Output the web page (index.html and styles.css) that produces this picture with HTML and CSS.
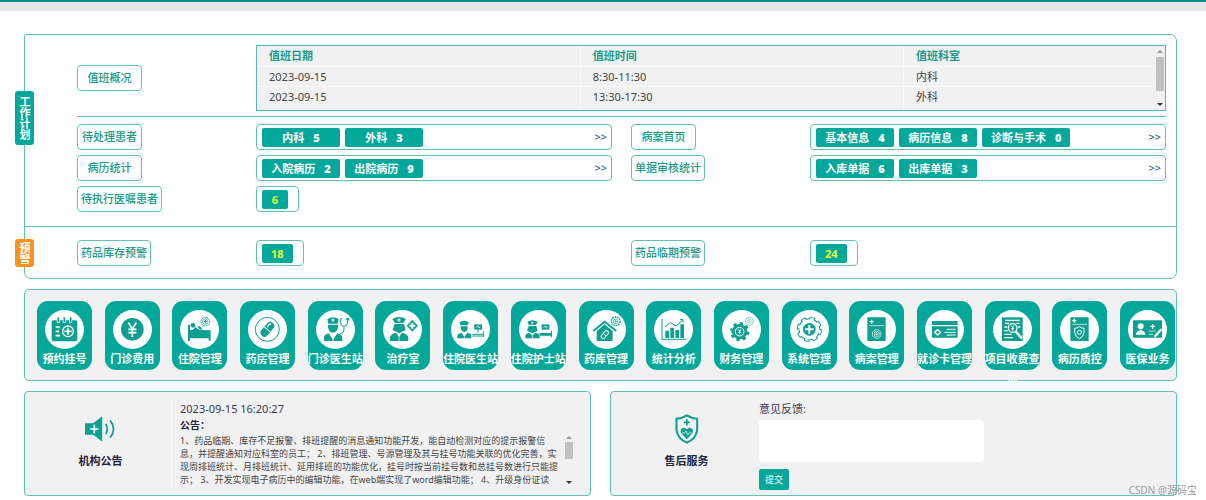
FILE: index.html
```html
<!DOCTYPE html>
<html lang="zh-CN">

	<head>
		<meta charset="UTF-8" />
		<meta name="viewport" content="width=device-width, initial-scale=1" />
		<title>工作台</title>
		<link rel="stylesheet" href="styles.css">
	</head>
	<body>
		<header class="topbar"></header>
		<main class="content">

			<!-- work plan + warnings -->
			<div class="panel">
				<section class="plan">
					<h2 class="side-tab">工作计划</h2>
					<div class="duty">
						<div class="name-col"><span class="name">值班概况</span></div>
						<div class="duty-box">
							<table class="duty-table">
								<thead>
									<tr><th class="col-date">值班日期</th><th class="col-time">值班时间</th><th>值班科室</th></tr>
								</thead>
								<tbody>
									<tr><td>2023-09-15</td><td>8:30-11:30</td><td>内科</td></tr>
									<tr><td>2023-09-15</td><td>13:30-17:30</td><td>外科</td></tr>
									<tr><td></td><td></td><td></td></tr>
								</tbody>
							</table>
							<div class="scroll"><i class="up"></i><i class="thumb"></i><i class="down"></i></div>
						</div>
					</div>
					<div class="items">
						<div class="item">
							<div class="name-col"><span class="name">待处理患者</span></div>
							<div class="values">
								<span class="chip">内科<b>5</b></span>
								<span class="chip">外科<b>3</b></span>
								<a class="more" href="#">&gt;&gt;</a>
							</div>
						</div>
						<div class="item">
							<div class="name-col"><span class="name">病案首页</span></div>
							<div class="values">
								<span class="chip">基本信息<b>4</b></span>
								<span class="chip">病历信息<b>8</b></span>
								<span class="chip">诊断与手术<b>0</b></span>
								<a class="more" href="#">&gt;&gt;</a>
							</div>
						</div>
						<div class="item">
							<div class="name-col"><span class="name">病历统计</span></div>
							<div class="values">
								<span class="chip">入院病历<b>2</b></span>
								<span class="chip">出院病历<b>9</b></span>
								<a class="more" href="#">&gt;&gt;</a>
							</div>
						</div>
						<div class="item">
							<div class="name-col"><span class="name">单据审核统计</span></div>
							<div class="values">
								<span class="chip">入库单据<b>6</b></span>
								<span class="chip">出库单据<b>3</b></span>
								<a class="more" href="#">&gt;&gt;</a>
							</div>
						</div>
						<div class="item">
							<div class="name-col"><span class="name">待执行医嘱患者</span></div>
							<div class="values small"><span class="chip count">6</span></div>
						</div>
					</div>
				</section>
				<section class="warn">
					<h2 class="side-tab orange">预警</h2>
					<div class="items">
						<div class="item">
							<div class="name-col"><span class="name">药品库存预警</span></div>
							<div class="values small"><span class="chip count">18</span></div>
						</div>
						<div class="item">
							<div class="name-col"><span class="name">药品临期预警</span></div>
							<div class="values small"><span class="chip count">24</span></div>
						</div>
					</div>
				</section>
			</div>

			<!-- modules -->
			<nav class="modules">
				<a class="module" href="#">
					<svg viewBox="0 0 117 117">
						<rect x="20" y="31" width="77" height="63" rx="6" />
						<path class="w" stroke-width="9" d="M40 24v14M58 24v14M77 24v14" />
						<path class="l" stroke-width="5" d="M40 22v14M58 22v14M77 22v14" />
						<path class="w" stroke-width="5" d="M32 51h13M32 64h10M32 77h13" />
						<circle class="w" cx="69" cy="64" r="16" stroke-width="4" />
						<path class="w" stroke-width="5" d="M69 53v22M58 64h22" />
					</svg>
					<span>预约挂号</span>
				</a>
				<a class="module" href="#">
					<svg viewBox="0 0 117 117">
						<circle cx="58" cy="58" r="34" />
						<path class="w" stroke-width="5" d="M46 38l12 19 12-19M58 57v24M46 58h24M46 68h24" />
					</svg>
					<span>门诊费用</span>
				</a>
				<a class="module" href="#">
					<svg viewBox="0 0 117 117">
						<circle cx="39" cy="46" r="7" />
						<path d="M24 44h6v16h9l6-9 14 9 33 1v31h-6v-7H30v8h-6zM51 50l8-1 9 9-7 1z" />
						<circle class="l" cx="76" cy="35" r="13" stroke-width="3" stroke-dasharray="5 2" />
						<circle class="l" cx="76" cy="35" r="8" stroke-width="2" />
						<path class="l" stroke-width="3" d="M76 30v10M71 35h10" />
					</svg>
					<span>住院管理</span>
				</a>
				<a class="module" href="#">
					<svg viewBox="0 0 117 117">
						<circle class="l" cx="58" cy="58" r="36" stroke-width="3" />
						<g transform="rotate(40 58 58)">
							<rect x="46" y="33" width="24" height="50" rx="12" />
							<path class="w" stroke-width="3" d="M46 58h24" />
							<path class="w" stroke-width="4" d="M53 53v-9q0-4 4-5" />
						</g>
					</svg>
					<span>药房管理</span>
				</a>
				<a class="module" href="#">
					<svg viewBox="0 0 117 117">
						<path d="M34 28q17-12 34 0l-3 13H37z" />
						<path class="w" stroke-width="3" d="M51 25v10M46 30h10" />
						<path d="M36 44h30v7q-2 17-15 17T36 51z" />
						<path d="M24 93V82q1-8 14-12l13 17 13-17q14 4 15 12v11z" />
						<path class="w" stroke-width="3" d="M51 88v6M42 73l9 14 9-14" />
						<path class="l" stroke-width="3" d="M78 26h-4v13q0 10 10 10t10-10V26h-4M84 49v10q0 12-12 12" />
						<circle cx="96" cy="28" r="4" />
					</svg>
					<span>门诊医生站</span>
				</a>
				<a class="module" href="#">
					<svg viewBox="0 0 117 117">
						<path d="M28 27q20-12 41 0l-8 12H36z" />
						<path class="w" stroke-width="3" d="M48 25v10M43 30h10" />
						<path d="M34 42h29l5 19-9 3q-10 10-21 0l-9-3z" />
						<path d="M21 93V82q2-10 18-14l9 13 9-13q17 4 19 14v11z" />
						<path class="w" stroke-width="2" d="M48 78v16" />
						<path d="M88 29l17 18-17 18-17-18z" />
						<path class="w" stroke-width="6" d="M88 38v18M79 47h18" />
					</svg>
					<span>治疗室</span>
				</a>
				<a class="module" href="#">
					<svg viewBox="0 0 117 117">
						<path d="M26 37q13-9 27 0l-2 9H28z" />
						<path d="M29 49h21v5q-2 12-10 12T29 54z" />
						<path d="M19 85v-9q2-6 12-8l9 11 9-11q11 2 12 8v9z" />
						<path class="w" stroke-width="2" d="M33 68l7 11 7-11M40 79v6" />
						<rect x="70" y="43" width="23" height="16" />
						<path class="w" stroke-width="2" d="M75 51h4l3-4 2 7 4-3" />
						<path class="l" stroke-width="3" d="M64 73h34M81 59v9M98 64v18M64 78h34" />
					</svg>
					<span>住院医生站</span>
				</a>
				<a class="module" href="#">
					<svg viewBox="0 0 117 117">
						<path d="M25 35q15-9 31 0l-5 10H30z" />
						<path d="M29 48h23l4 15-8 3q-8 7-16 0l-8-3z" />
						<path d="M19 85v-8q2-7 13-9l8 9 8-9q13 2 14 9v8z" />
						<path class="w" stroke-width="2" d="M40 35v8M36 39h8M40 77v8" />
						<rect x="68" y="43" width="23" height="16" />
						<path class="w" stroke-width="2" d="M73 51h4l3-4 2 7 4-3" />
						<path d="M62 69h34v-7h3v20h-3v-5H62z" />
					</svg>
					<span>住院护士站</span>
				</a>
				<a class="module" href="#">
					<svg viewBox="0 0 117 117">
						<path class="l" stroke-width="6" d="M19 63l34-28 35 28" />
						<path d="M29 63l24-20 24 20v26q0 4-4 4H33q-4 0-4-4z" />
						<g transform="rotate(42 53 74)">
							<rect class="w" x="47" y="60" width="12" height="27" rx="6" stroke-width="3" />
							<path class="w" stroke-width="3" d="M47 74h12" />
						</g>
						<circle class="l" cx="86" cy="34" r="13" stroke-width="4" stroke-dasharray="5 2" />
						<circle class="l" cx="86" cy="34" r="7" stroke-width="2" />
						<path class="l" stroke-width="2" d="M86 30v8M82 34h8" />
					</svg>
					<span>药库管理</span>
				</a>
				<a class="module" href="#">
					<svg viewBox="0 0 117 117">
						<path class="l" stroke-width="3" d="M24 27v61h72" />
						<path d="M34 62h11v22H34zM49 53h11v31H49zM64 60h11v24H64zM79 43h11v41H79z" />
						<path class="l" stroke-width="3" d="M33 50l16-12 17 10 20-18M78 29h9v9" />
					</svg>
					<span>统计分析</span>
				</a>
				<a class="module" href="#">
					<svg viewBox="0 0 117 117">
						<circle cx="53" cy="65" r="23" />
						<circle class="l" cx="53" cy="65" r="25" stroke-width="8" pathLength="80" stroke-dasharray="5 5" />
						<circle class="w" cx="53" cy="65" r="13" stroke-width="3" />
						<path class="w" stroke-width="3" d="M49 58l4 6 4-6M53 64v9M49 67h8" />
						<g opacity=".5">
							<circle class="l" cx="82" cy="34" r="12" stroke-width="4" stroke-dasharray="5 2" />
							<circle class="l" cx="82" cy="34" r="6" stroke-width="2" />
							<path class="l" stroke-width="2" d="M82 30v8M78 34h8" />
						</g>
					</svg>
					<span>财务管理</span>
				</a>
				<a class="module" href="#">
					<svg viewBox="0 0 117 117">
						<circle cx="58" cy="58" r="33" />
						<circle class="l" cx="58" cy="58" r="34" stroke-width="8" pathLength="80" stroke-dasharray="6 4" />
						<circle class="f" cx="58" cy="58" r="30" />
						<circle class="w" cx="58" cy="58" r="31" stroke-width="8" pathLength="80" stroke-dasharray="4 6" stroke-dashoffset="-1" />
						<circle cx="58" cy="58" r="19" />
						<path class="w" stroke-width="6" d="M58 45v26M45 58h26" />
					</svg>
					<span>系统管理</span>
				</a>
				<a class="module" href="#">
					<svg viewBox="0 0 117 117">
						<rect x="31" y="22" width="55" height="71" rx="2" />
						<path class="w" stroke-width="4" d="M44 29v12M38 35h12" />
						<path class="w" stroke-width="2" d="M37 47h44" />
						<circle class="w" cx="59" cy="72" r="13" stroke-width="2" />
						<circle class="w" cx="59" cy="72" r="8" stroke-width="2" />
						<path class="w" stroke-width="2" d="M59 67v10M54 72h10" />
					</svg>
					<span>病案管理</span>
				</a>
				<a class="module" href="#">
					<svg viewBox="0 0 117 117">
						<rect x="21" y="33" width="77" height="50" rx="2" />
						<path class="w" stroke-width="4" d="M21 47h77" />
						<path class="w" stroke-width="4" d="M38 59l9 8-9 8-9-8z" />
						<path class="w" stroke-width="3" d="M65 58h27M58 67h34M65 75h27" />
					</svg>
					<span>就诊卡管理</span>
				</a>
				<a class="module" href="#">
					<svg viewBox="0 0 117 117">
						<rect x="27" y="22" width="62" height="71" />
						<path class="w" stroke-width="4" d="M36 31h44M36 40h12M70 40h10M34 51h10M74 51h8M34 62h12M34 73h22M34 83h26" />
						<circle cx="59" cy="54" r="17" />
						<circle class="w" cx="59" cy="54" r="13" stroke-width="4" />
						<path class="w" stroke-width="3" d="M55 47l4 6 4-6M59 53v9M55 56h8" />
						<path class="w" stroke-width="7" d="M68 65l19 20" />
					</svg>
					<span>项目收费查询</span>
				</a>
				<a class="module" href="#">
					<svg viewBox="0 0 117 117">
						<rect x="31" y="22" width="55" height="71" rx="2" />
						<path class="w" stroke-width="4" d="M43 26v12M37 32h12" />
						<path class="w" stroke-width="2" d="M37 43h44" />
						<path class="w" stroke-width="3" d="M58 50q7 5 14 5v12q-2 14-14 19-12-5-14-19V55q7 0 14-5z" />
						<circle class="w" cx="58" cy="67" r="6" stroke-width="3" />
					</svg>
					<span>病历质控</span>
				</a>
				<a class="module" href="#">
					<svg viewBox="0 0 117 117">
						<rect x="15" y="31" width="87" height="52" rx="3" />
						<circle class="f" cx="38" cy="49" r="9" />
						<path class="f" d="M24 74q0-11 14-14 14 3 14 14z" />
						<path class="w" stroke-width="4" d="M74 42v14M67 49h14" />
						<path class="w" stroke-width="2" d="M62 63h22M62 73h14" />
						<path class="w" stroke-width="7" d="M80 80l20-22" />
					</svg>
					<span>医保业务</span>
				</a>
			</nav>

			<div class="bottom">
				<section class="card">
					<div class="card-side">
						<svg class="speaker" viewBox="0 0 90 74">
							<path d="M0 20h24L50 0v74L24 54H0z" />
							<path class="w" stroke-width="5" d="M27 25v24M15 37h24" />
							<path class="l" stroke-width="5" d="M60 22q9 15 0 30M73 12q20 25 0 50" />
						</svg>
						<h3>机构公告</h3>
					</div>
					<div class="card-main">
						<time class="time">2023-09-15 16:20:27</time>
						<strong class="notice-title">公告：</strong>
						<div class="notice">
							<p>1、药品临期、库存不足报警、排班提醒的消息通知功能开发，能自动检测对应的提示报警信息，并提醒通知对应科室的员工； 2、排班管理、号源管理及其与挂号功能关联的优化完善，实现周排班统计、月排班统计、延用排班的功能优化，挂号时按当前挂号数和总挂号数进行只能提示； 3、开发实现电子病历中的编辑功能，在web端实现了word编辑功能； 4、升级身份证读</p>
							<div class="scroll"><i class="up"></i><i class="thumb short"></i><i class="down"></i></div>
						</div>
					</div>
				</section>
				<section class="card">
					<div class="card-side">
						<svg class="shield" viewBox="0 0 69 87">
							<path class="l" stroke-width="6" d="M34 4q14 9 30 10v32q-3 26-30 37Q7 72 4 46V14q16-1 30-10z" />
							<path class="l" stroke-width="5" d="M34 15v18M25 24h18" />
							<path d="M34 73L19 57q-7-10 2-16 8-4 13 4 5-8 13-4 9 6 2 16z" />
							<path class="w" stroke-width="2" d="M20 55h8l4-6 5 12 4-6h8" />
						</svg>
						<h3>售后服务</h3>
					</div>
					<form class="card-main no-line">
						<label for="feedback">意见反馈:</label>
						<textarea id="feedback"></textarea>
						<button type="button">提交</button>
					</form>
				</section>
			</div>
		</main>
		<div class="watermark">CSDN @源码宝</div>
	</body>
</html>
```
FILE: styles.css
```css
* {
	box-sizing: border-box;
}

body {
	margin: 0;
	background: #fff;
	color: #444;
	font-family: "Noto Sans", "Noto Sans CJK SC", sans-serif;
	font-size: 11px;
	line-height: 20px;
}

h2, h3, p {
	margin: 0;
}

a {
	text-decoration: none;
}

.topbar {
	height: 11px;
	background: #e6e6e9;
	border-top: 2px solid #028b8f;
}

.content {
	padding: 23px 29px 0 24px;
}

/* work plan */
.panel {
	border: 1px solid #62c1b2;
	border-radius: 2px 7px 7px 7px;
}

.plan, .warn {
	position: relative;
	padding: 10px 10px 14px 52px;
}

.plan {
	border-bottom: 1px solid #62c1b2;
}

.side-tab {
	position: absolute;
	left: -10px;
	top: 56px;
	width: 19px;
	padding: 5px 0;
	border-radius: 3px;
	background: #03a89b;
	color: #fff;
	font-size: 11px;
	line-height: 19px;
	writing-mode: vertical-rl;
	text-align: center;
}

.duty {
	display: flex;
	align-items: center;
	padding-bottom: 5px;
	border-bottom: 1px solid #62c1b2;
	margin-bottom: 7px;
}

.warn {
	padding-top: 13px;
	padding-bottom: 12px;
}

.side-tab.orange {
	top: 12px;
	padding: 3px 0;
	background: #f7931e;
}

.name-col {
	flex: 0 0 179px;
}

.name {
	display: inline-block;
	min-width: 65px;
	padding: 0 3px;
	border: 1px solid #62c1b2;
	border-radius: 4px;
	color: #189a89;
	font-weight: 500;
	line-height: 24px;
	text-align: center;
	vertical-align: top;
}

.duty-box {
	flex: 1;
	display: flex;
	height: 66px;
	overflow: hidden;
	border: 1px solid #56b9b0;
	background: #f1f1f1;
}

.duty-table {
	flex: 1;
	align-self: flex-start;
	table-layout: fixed;
	border-collapse: collapse;
	text-align: left;
}

.duty-table th,
.duty-table td {
	height: 20px;
	padding: 0 0 0 12px;
	border-right: 1px solid #fafafa;
	border-bottom: 1px solid #fafafa;
	line-height: 19px;
}

.duty-table th:last-child,
.duty-table td:last-child {
	border-right: none;
}

.duty-table th {
	color: #189a89;
}

.duty-table .col-date,
.duty-table .col-time {
	width: 36%;
}

.scroll {
	display: flex;
	flex-direction: column;
	align-items: center;
	flex: 0 0 10px;
	padding: 4px 0;
}

.scroll .up,
.scroll .down {
	border: 3px solid transparent;
	border-top: none;
	border-bottom: 3px solid #999;
}

.scroll .down {
	border-top: 3px solid #333;
	border-bottom: none;
	margin-top: auto;
}

.scroll .thumb {
	width: 8px;
	height: 34px;
	margin-top: 4px;
	background: #c1c1c1;
}

.scroll .short {
	height: 17px;
	margin-top: 3px;
}

.items {
	display: grid;
	grid-template-columns: 1fr 1fr;
	gap: 5px 19px;
}

.item {
	display: flex;
}

.values {
	flex: 1;
	display: flex;
	align-items: center;
	gap: 5px;
	height: 26px;
	padding: 0 4px 0 5px;
	border: 1px solid #62c1b2;
	border-radius: 4px;
}

.values.small {
	flex: none;
	padding-right: 10px;
}

.chip {
	min-width: 78px;
	padding: 0 9px;
	border-radius: 2px;
	background: #03a89b;
	color: #fff;
	font-weight: bold;
	line-height: 19px;
	text-align: center;
}

.chip b {
	margin-left: 9px;
}

.chip.count {
	min-width: 26px;
	color: #e4ff2b;
}

.more {
	margin-left: auto;
	color: #22609c;
	font-weight: 500;
}

/* modules */
.modules {
	display: flex;
	justify-content: space-between;
	margin-top: 10px;
	padding: 11px 1px 10px 12px;
	border: 1px solid #62c1b2;
	border-radius: 5px;
	background: #f1f1f1;
}

.module {
	width: 55px;
	height: 69px;
	padding-top: 9px;
	border-radius: 11px;
	background: #03a89b;
	color: #fff;
	font-weight: bold;
	text-align: center;
}

.module svg {
	display: block;
	width: 39px;
	height: 39px;
	margin: 0 auto;
	border-radius: 50%;
	background: #fff;
}

.module span {
	display: block;
}

svg {
	fill: #0e9f91;
}

.l {
	fill: none;
	stroke: #0e9f91;
}

.w {
	fill: none;
	stroke: #fff;
}

.f {
	fill: #fff;
}

/* notice and feedback */
.bottom {
	display: grid;
	grid-template-columns: 1fr 1fr;
	gap: 19px;
	margin-top: 10px;
}

.card {
	display: flex;
	height: 105px;
	padding: 8px 16px 5px 0;
	border: 1px solid #62c1b2;
	border-radius: 4px;
	background: #f1f1f1;
}

.card-side {
	flex: 0 0 146px;
	display: flex;
	flex-direction: column;
	align-items: center;
	padding: 14px 0 0 5px;
}

.card-side svg {
	height: 30px;
}

.speaker {
	width: 31px;
}

.shield {
	width: 24px;
}

.card-side h3 {
	margin-top: 7px;
	color: #23233f;
	font-size: 11px;
}

.card-main {
	flex: 1;
	display: flex;
	flex-direction: column;
	align-items: flex-start;
	padding-left: 8px;
	border-left: 1px solid #fafafa;
	line-height: 17px;
}

.card-main.no-line {
	padding-left: 2px;
	border-left: none;
}

.time,
.card-main label {
	color: #3a3a50;
}

.notice-title {
	color: #23233f;
	font-size: 10px;
}

.notice {
	display: flex;
	align-self: stretch;
	height: 52px;
	overflow: hidden;
}

.notice p {
	flex: 1;
	padding-right: 2px;
	font-size: 9px;
	line-height: 13px;
}

.notice .scroll {
	padding: 2px 0;
}

.card-main textarea {
	width: 56%;
	height: 42px;
	flex-shrink: 0;
	margin-top: 3px;
	border: none;
	border-radius: 4px;
	background: #fff;
	resize: none;
}

.card-main button {
	margin-top: 7px;
	padding: 0 6px;
	border: none;
	border-radius: 2px;
	background: #03a89b;
	color: #fff;
	font-family: inherit;
	font-size: 9px;
	line-height: 21px;
}

.watermark {
	position: fixed;
	right: 9px;
	bottom: 3px;
	color: #999;
	font-size: 10px;
	line-height: 14px;
}
```
